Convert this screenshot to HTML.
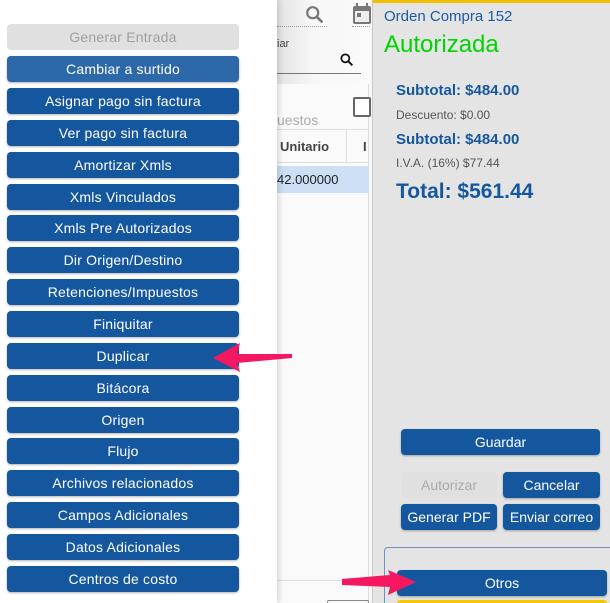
<!DOCTYPE html>
<html style="overflow:hidden;height:603px"><head><style>
*{margin:0;padding:0;box-sizing:border-box}
body{width:610px;height:603px;overflow:hidden;position:relative;background:#f4f4f4;font-family:"Liberation Sans",sans-serif}
.menu{position:absolute;left:0;top:0;width:277px;height:603px;background:#fff;box-shadow:2px 0 6px rgba(0,0,0,.15)}
.b{position:absolute;left:7px;width:232px;height:26px;border-radius:4px;background:#15579e;color:#fff;font-size:14px;text-align:center;line-height:26px;box-shadow:0 1px 2px rgba(0,0,0,.3);letter-spacing:.2px}
.mid{position:absolute;left:277px;top:0;width:94px;height:603px;overflow:hidden;background:linear-gradient(90deg,#e4e4e4,#f7f7f7 40%,#fafafa)}
.right{position:absolute;left:372px;top:0;width:238px;height:603px;overflow:hidden;background:#e4e4e4;border-top:3px solid #f0c000;border-left:1px solid #ccc}
.rb{position:absolute;height:26px;border-radius:4px;background:#15579e;color:#fff;font-size:14px;text-align:center;line-height:26px;box-shadow:0 1px 2px rgba(0,0,0,.3)}
.t{position:absolute;white-space:nowrap}
</style></head><body>
<div class="mid">
 <svg class="t" style="left:27px;top:4px" width="22" height="22" viewBox="0 0 24 24"><circle cx="9.5" cy="9.5" r="6" fill="none" stroke="#777" stroke-width="2.4"/><path d="M14 14l6 6" stroke="#777" stroke-width="2.8"/></svg>
 <svg class="t" style="left:74px;top:2px" width="22" height="24" viewBox="0 0 22 24"><rect x="2" y="4" width="18" height="18" rx="2" fill="#777"/><rect x="4" y="9" width="14" height="11" fill="#eee"/><rect x="6" y="11" width="4" height="4" fill="#777"/><rect x="5" y="1" width="2" height="5" fill="#777"/><rect x="15" y="1" width="2" height="5" fill="#777"/></svg>
 <div style="position:absolute;left:0;top:26px;width:50px;border-top:1px dotted #999"></div>
 <div style="position:absolute;left:75px;top:26px;width:20px;border-top:1px dotted #999"></div>
 <div class="t" style="left:0;top:38px;font-size:11px;color:#444">iar</div>
 <svg class="t" style="left:62px;top:52px" width="16" height="16" viewBox="0 0 24 24"><circle cx="9.5" cy="9.5" r="6" fill="none" stroke="#111" stroke-width="2.6"/><path d="M14 14l6 6" stroke="#111" stroke-width="3"/></svg>
 <div style="position:absolute;left:0;top:73px;width:84px;border-top:1px solid #777"></div>
 <div style="position:absolute;left:0;top:84px;width:92px;height:520px;background:#fafafa;border-right:1px solid #ddd"></div>
 <div style="position:absolute;left:76px;top:97px;width:18px;height:20px;border:2px solid #666;border-radius:2px;background:#fff"></div>
 <div class="t" style="left:0;top:112px;font-size:14px;color:#aaa">uestos</div>
 <div style="position:absolute;left:0;top:129px;width:92px;border-top:1px solid #ddd"></div>
 <div style="position:absolute;left:0;top:162px;width:92px;border-top:1px solid #ddd"></div>
 <div style="position:absolute;left:69px;top:130px;height:32px;border-left:1px solid #ddd"></div>
 <div class="t" style="left:3px;top:139px;font-size:13px;font-weight:bold;color:#444">Unitario</div>
 <div class="t" style="left:86px;top:139px;font-size:13px;font-weight:bold;color:#444">I</div>
 <div style="position:absolute;left:0;top:166px;width:92px;height:27px;background:#cddff5"></div>
 <div class="t" style="left:0;top:172px;font-size:13px;color:#222">42.000000</div>
 <div style="position:absolute;left:0;top:580px;width:92px;border-top:1px solid #ddd"></div>
 <div style="position:absolute;left:50px;top:600px;width:42px;height:10px;border:1px solid #888;border-radius:2px"></div>
</div>
<div class="right">
 <div class="t" style="left:11px;top:5px;font-size:15px;color:#1b5aa5">Orden Compra 152</div>
 <div class="t" style="left:11px;top:28px;font-size:24px;color:#00d400">Autorizada</div>
 <div class="t" style="left:23px;top:79px;font-size:15px;font-weight:bold;color:#15579e">Subtotal: $484.00</div>
 <div class="t" style="left:23px;top:105px;font-size:12px;color:#555">Descuento: $0.00</div>
 <div class="t" style="left:23px;top:128px;font-size:15px;font-weight:bold;color:#15579e">Subtotal: $484.00</div>
 <div class="t" style="left:23px;top:153px;font-size:12px;color:#555">I.V.A. (16%) $77.44</div>
 <div class="t" style="left:23px;top:177px;font-size:21px;font-weight:bold;color:#15579e">Total: $561.44</div>
 <div class="rb" style="left:28px;top:426px;width:199px">Guardar</div>
 <div class="rb" style="left:28px;top:469px;width:96px;background:#e0e0e0;color:#aaa;box-shadow:none">Autorizar</div>
 <div class="rb" style="left:130px;top:469px;width:97px">Cancelar</div>
 <div class="rb" style="left:28px;top:501px;width:96px">Generar PDF</div>
 <div class="rb" style="left:130px;top:501px;width:97px">Enviar correo</div>
 <div style="position:absolute;left:11px;top:544px;width:240px;height:70px;border:1px solid #6f8fc8;border-radius:4px"></div>
 <div class="rb" style="left:24px;top:567px;width:210px">Otros</div>
 <div style="position:absolute;left:24px;top:597px;width:210px;height:10px;background:#f5c800;border-radius:3px"></div>
</div>
<div class="menu">
 <div class="b" style="top:24px;background:#e0e0e0;color:#a0a0a0;box-shadow:none">Generar Entrada</div>
 <div class="b" style="top:56px;background:#2d68a8">Cambiar a surtido</div>
 <div class="b" style="top:88px">Asignar pago sin factura</div>
 <div class="b" style="top:120px">Ver pago sin factura</div>
 <div class="b" style="top:152px">Amortizar Xmls</div>
 <div class="b" style="top:184px">Xmls Vinculados</div>
 <div class="b" style="top:215px">Xmls Pre Autorizados</div>
 <div class="b" style="top:247px">Dir Origen/Destino</div>
 <div class="b" style="top:279px">Retenciones/Impuestos</div>
 <div class="b" style="top:311px">Finiquitar</div>
 <div class="b" style="top:343px">Duplicar</div>
 <div class="b" style="top:375px">Bitácora</div>
 <div class="b" style="top:407px">Origen</div>
 <div class="b" style="top:438px">Flujo</div>
 <div class="b" style="top:470px">Archivos relacionados</div>
 <div class="b" style="top:502px">Campos Adicionales</div>
 <div class="b" style="top:534px">Datos Adicionales</div>
 <div class="b" style="top:566px">Centros de costo</div>
</div>
<svg style="position:absolute;left:0;top:0" width="610" height="603">
 <polygon points="213,358 240,343 237,354 292,354 292,358 237,363 240,372" fill="#f5175f"/>
 <polygon points="342,579 390,575 388,570 416,582 388,595 390,587 342,585" fill="#f5175f"/>
</svg>
</body></html>
